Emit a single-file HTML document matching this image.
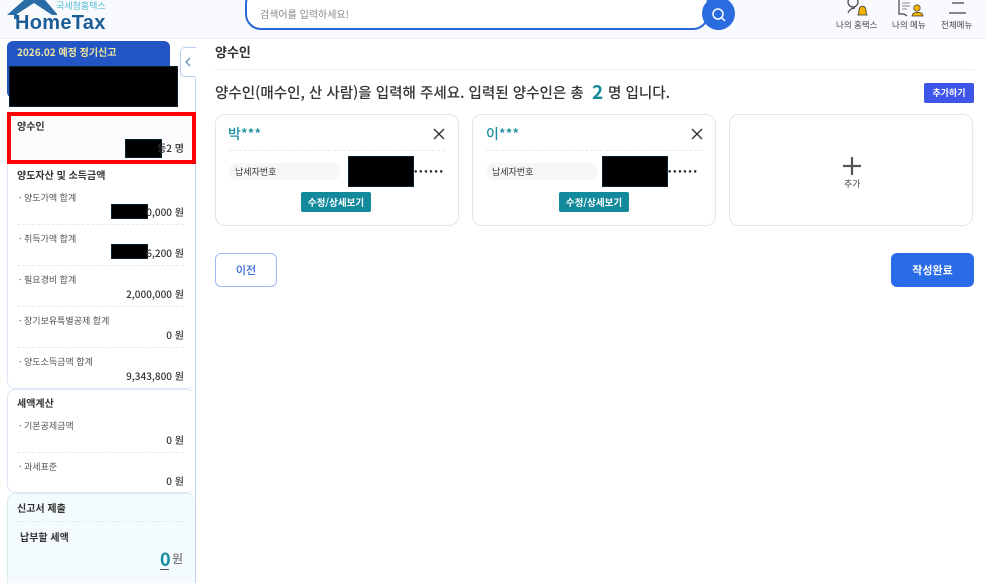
<!DOCTYPE html>
<html lang="ko"><head><meta charset="utf-8"><style>
html,body{margin:0;padding:0;background:#fff;overflow:hidden;width:1008px;height:583px}
body{position:relative;font-family:"Noto Sans CJK KR","Liberation Sans",sans-serif;color:#333}
#p{position:absolute;left:0;top:0;width:1008px;height:583px;overflow:hidden;filter:blur(.35px)}
.a{position:absolute}
.t{position:absolute;white-space:nowrap;line-height:14px}
.r{text-align:right;right:824px;font-size:10px;color:#333;font-weight:500}
.lab{left:19px;font-size:9px;color:#555}
.h{left:17px;font-size:10px;font-weight:700;color:#333}
.dash{position:absolute;left:17px;width:167px;border-top:1px dashed #e3e9f1}
.blk{position:absolute;background:#000;border:1px solid #0a2230;box-sizing:border-box}
.card{position:absolute;top:114px;width:244px;height:112px;box-sizing:border-box;border:1px solid #e6e6e6;border-radius:10px;background:#fff}
.name{position:absolute;font-size:14px;color:#1f8ea3;font-weight:500;line-height:16px}
.pill{position:absolute;top:163px;width:111px;height:17px;border-radius:9px;background:#f6f6f6;font-size:9px;line-height:17px;color:#333;text-indent:6px}
.btn{position:absolute;top:192px;width:70px;height:20px;border-radius:2px;background:#128a9c;color:#fff;font-size:9.5px;font-weight:700;line-height:20px;text-align:center}
.dots{position:absolute;top:164px;font-size:9px;line-height:14px;color:#333;font-weight:700;letter-spacing:1.7px}
</style></head><body><div id="p">

<!-- header -->
<div class="a" style="left:0;top:0;width:986px;height:38px;background:#f8fafe;border-bottom:1px solid #eef0f3"></div>
<svg class="a" style="left:5px;top:0" width="52" height="20" viewBox="0 0 52 20"><path d="M2 15 L19 0 L40 0 L53 15 L47 15 L29 3 L12 14 L12 19 L9 19 L9 15Z" fill="#2a6ca5"/></svg>
<div class="t" style="left:15px;top:12px;font-size:20px;line-height:22px;font-weight:700;font-family:'Liberation Sans',sans-serif;color:#1d5d97;letter-spacing:.3px">HomeTax</div>
<div class="t" style="left:56px;top:0;font-size:9px;line-height:12px;color:#53bcd0">국세청홈택스</div>
<div class="a" style="left:245px;top:-12px;width:464px;height:42px;box-sizing:border-box;border:2px solid #2a68d8;border-radius:16px;background:#fff"></div>
<div class="t" style="left:260px;top:7px;font-size:10px;color:#888">검색어를 입력하세요!</div>
<div class="a" style="left:702px;top:-3px;width:33px;height:33px;border-radius:50%;background:#2a6be0"></div>
<svg class="a" style="left:710px;top:6px" width="17" height="17" viewBox="0 0 17 17" fill="none" stroke="#fff" stroke-width="1.5"><circle cx="8" cy="8" r="5"/><path d="M12 12l3 3"/></svg>
<svg class="a" style="left:840px;top:0" width="30" height="18" viewBox="0 0 30 18" fill="none"><circle cx="13" cy="2" r="5" stroke="#444" stroke-width="1.2"/><path d="M8 13c1-3 4-5 7-5" stroke="#444" stroke-width="1.2"/><path d="M18 15c1-1 1-3 1-5 0-5 7-5 7 0 0 2 0 4 1 5z" fill="#f4b400" stroke="#333" stroke-width=".8"/></svg>
<svg class="a" style="left:895px;top:0" width="30" height="18" viewBox="0 0 30 18" fill="none"><path d="M4 0v14h5l3 2" stroke="#444" stroke-width="1.2"/><path d="M7 3h8M7 6h8M7 9h5" stroke="#888"/><circle cx="22" cy="8" r="3.2" fill="#f4b400" stroke="#333" stroke-width=".7"/><path d="M17 16c0-5 11-5 11 0z" fill="#f4b400" stroke="#333" stroke-width=".7"/></svg>
<svg class="a" style="left:948px;top:0" width="20" height="16" viewBox="0 0 20 16" stroke="#444" stroke-width="1.2"><path d="M4 3h12M1 13h17"/></svg>
<div class="t" style="left:836px;top:18px;font-size:8.5px;color:#444">나의 홈택스</div>
<div class="t" style="left:892px;top:18px;font-size:8.5px;color:#444">나의 메뉴</div>
<div class="t" style="left:941px;top:18px;font-size:8.5px;color:#444">전체메뉴</div>

<!-- sidebar -->
<div class="a" style="left:7px;top:41px;width:163px;height:57px;background:#2356c4;border-radius:6px"></div>
<div class="t" style="left:17px;top:45px;font-size:10px;color:#f0e6a0;font-weight:700">2026.02 예정 정기신고</div>
<div class="blk" style="left:9px;top:66px;width:169px;height:41px"></div>
<div class="a" style="left:180px;top:47px;width:16px;height:30px;box-sizing:border-box;border:1px solid #b5cdf3;border-right:0;border-radius:5px 0 0 5px;background:#fff"></div>
<svg class="a" style="left:184px;top:57px" width="8" height="10" viewBox="0 0 8 10" fill="none" stroke="#4d7fb5" stroke-width="1.2"><path d="M6 1L2 5l4 4"/></svg>

<div class="a" style="left:7px;top:112px;width:189px;height:52px;box-sizing:border-box;border:4px solid #fb0007;background:#fbfbfd"></div>
<div class="t h" style="top:119px">양수인</div>
<div class="blk" style="left:125px;top:139px;width:37px;height:19px"></div>
<div class="t r" style="top:141px;">등2 명</div>

<div class="a" style="left:7px;top:164px;width:188px;height:225px;box-sizing:border-box;border:1px solid #dce8f8;border-top:0;border-right:0;border-radius:0 0 8px 8px;background:#fff"></div>
<div class="t h" style="top:168px">양도자산 및 소득금액</div>

<div class="t lab" style="top:191px">· 양도가액 합계</div>
<div class="blk" style="left:111px;top:204px;width:37px;height:15px"></div>
<div class="t r" style="top:205px">0,000 원</div>
<div class="dash" style="top:224px"></div>
<div class="t lab" style="top:232px">· 취득가액 합계</div>
<div class="blk" style="left:111px;top:244px;width:37px;height:15px"></div>
<div class="t r" style="top:246px">6,200 원</div>
<div class="dash" style="top:265px"></div>
<div class="t lab" style="top:273px">· 필요경비 합계</div>
<div class="t r" style="top:287px">2,000,000 원</div>
<div class="dash" style="top:306px"></div>
<div class="t lab" style="top:314px">· 장기보유특별공제 합계</div>
<div class="t r" style="top:328px">0 원</div>
<div class="dash" style="top:347px"></div>
<div class="t lab" style="top:355px">· 양도소득금액 합계</div>
<div class="t r" style="top:369px">9,343,800 원</div>

<div class="a" style="left:7px;top:389px;width:188px;height:104px;box-sizing:border-box;border:1px solid #dce8f8;border-right:0;border-radius:8px;background:#fff"></div>
<div class="t h" style="top:396px">세액계산</div>
<div class="t lab" style="top:419px">· 기본공제금액</div>
<div class="t r" style="top:433px">0 원</div>
<div class="dash" style="top:452px"></div>
<div class="t lab" style="top:460px">· 과세표준</div>
<div class="t r" style="top:474px">0 원</div>

<div class="a" style="left:7px;top:493px;width:188px;height:100px;box-sizing:border-box;border:1px solid #d8ebef;border-right:0;border-radius:8px 8px 0 0;background:#f3fbfd"></div>
<div class="t h" style="top:501px">신고서 제출</div>
<div class="dash" style="top:521px"></div>
<div class="t" style="left:20px;top:530px;font-size:10px;font-weight:700;color:#333">납부할 세액</div>
<div class="t" style="left:160px;top:550px;font-size:18px;line-height:18px;font-weight:700;color:#17899c">0</div>
<div class="t" style="left:172px;top:552px;font-size:12px;font-weight:500;color:#777">원</div>
<div class="a" style="left:160px;top:569px;width:9px;height:1px;background:#555"></div>
<div class="a" style="left:194.5px;top:78px;width:1.5px;height:34px;background:#bcd2f5"></div>
<div class="a" style="left:194.5px;top:164px;width:1.5px;height:419px;background:#bcd2f5"></div>

<!-- main -->
<div class="t" style="left:215px;top:45px;font-size:13px;font-weight:700;color:#333">양수인</div>
<div class="a" style="left:215px;top:69px;width:759px;height:1px;background:#eee"></div>
<div class="t" style="left:215px;top:84px;font-size:14.55px;line-height:18px;font-weight:500;color:#333">양수인(매수인, 산 사람)을 입력해 주세요. 입력된 양수인은 총</div>
<div class="t" style="left:592px;top:81px;font-size:19px;line-height:22px;font-weight:700;color:#17899c">2</div>
<div class="t" style="left:608px;top:84px;font-size:14.55px;line-height:18px;font-weight:500;color:#333">명 입니다.</div>
<div class="a" style="left:924px;top:83px;width:50px;height:20px;border-radius:2px;background:#3d55e8;color:#fff;font-size:9px;font-weight:700;line-height:20px;text-align:center">추가하기</div>

<div class="card" style="left:215px"></div>
<div class="name" style="left:228px;top:126px">박***</div>
<svg class="a" style="left:433px;top:128px" width="12" height="12" viewBox="0 0 12 12" stroke="#333" stroke-width="1.4"><path d="M1 1l10 10M11 1L1 11"/></svg>
<div class="dash" style="left:229px;top:150px;width:216px;border-color:#e8e8e8"></div>
<div class="pill" style="left:229px">납세자번호</div>
<div class="blk" style="left:348px;top:156px;width:66px;height:31px"></div>
<div class="dots" style="left:414px">••••••</div>
<div class="btn" style="left:301px">수정/상세보기</div>

<div class="card" style="left:472px"></div>
<div class="name" style="left:486px;top:126px">이***</div>
<svg class="a" style="left:691px;top:128px" width="12" height="12" viewBox="0 0 12 12" stroke="#333" stroke-width="1.4"><path d="M1 1l10 10M11 1L1 11"/></svg>
<div class="dash" style="left:486px;top:150px;width:216px;border-color:#e8e8e8"></div>
<div class="pill" style="left:486px">납세자번호</div>
<div class="blk" style="left:602px;top:156px;width:66px;height:31px"></div>
<div class="dots" style="left:668px">••••••</div>
<div class="btn" style="left:559px">수정/상세보기</div>

<div class="card" style="left:729px"></div>
<svg class="a" style="left:842px;top:156px" width="20" height="20" viewBox="0 0 20 20" stroke="#555" stroke-width="2.2"><path d="M1 10h18M10 1v18"/></svg>
<div class="t" style="left:844px;top:177px;font-size:9px;color:#444">추가</div>

<div class="a" style="left:215px;top:253px;width:62px;height:34px;box-sizing:border-box;border:1px solid #9dbaf5;border-radius:6px;background:#fff;color:#2f66d8;font-size:11px;font-weight:500;line-height:32px;text-align:center">이전</div>
<div class="a" style="left:891px;top:253px;width:83px;height:34px;border-radius:6px;background:#2a6be8;color:#fff;font-size:11px;font-weight:700;line-height:34px;text-align:center">작성완료</div>
</div></body></html>
